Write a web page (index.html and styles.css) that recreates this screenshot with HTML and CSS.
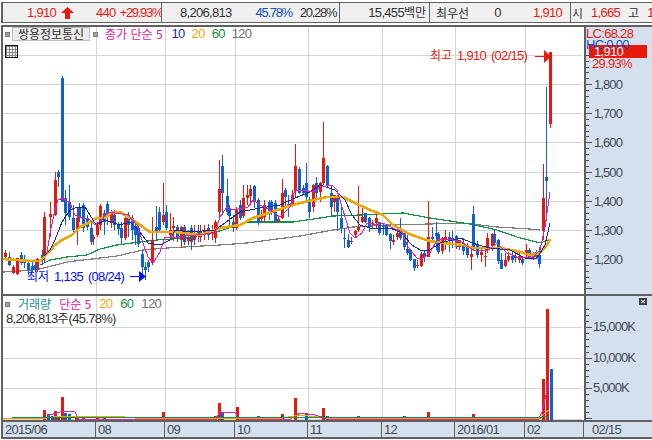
FILE: index.html
```html
<!DOCTYPE html>
<html lang="ko">
<head>
    <meta charset="UTF-8">
    <title>쌍용정보통신 차트</title>
    <link rel="stylesheet" href="styles.css">
</head>
<body>
    <div class="quote-bar">
        <div class="cell cell-price">
            <span class="up">1,910</span>
            <svg class="up-arrow" width="13" height="12" viewBox="0 0 13 12"><polygon points="6.5,0 13,6 9,6 9,12 4,12 4,6 0,6" fill="#e8180c"/></svg>
            <span class="up change">440</span>
            <span class="up rate-top pct">+29.93%</span>
        </div>
        <div class="cell cell-volume">
            <span>8,206,813</span>
            <span class="blue ratio pct">45.78%</span>
            <span class="turnover pct">20.28%</span>
        </div>
        <div class="cell cell-amount"><span>15,455<span class="ko">백만</span></span></div>
        <div class="cell cell-best">
            <span class="ko">최우선</span>
            <span class="best-qty">0</span>
            <span class="up best-price">1,910</span>
        </div>
        <div class="cell cell-ohlc">
            <span class="ko">시</span>
            <span class="up open">1,665</span>
            <span class="ko high-label">고</span>
            <span class="up high">1,910</span>
        </div>
    </div>

    <div class="chart">
        <div class="row row-price">
            <div class="plot">
                <svg class="plot-svg" width="581" height="267" viewBox="3 27 581 267">
                    <path class="grid" d="M96.5 27V294M165.5 27V294M235.5 27V294M308.5 27V294M382.5 27V294M455.5 27V294M525.5 27V294"/>
                    <path class="grid" d="M3 55.5H582M3 84.5H582M3 113.5H582M3 142.5H582M3 172.5H582M3 201.5H582M3 230.5H582M3 259.5H582"/>
                    <polyline class="ma ma120" points="3,272 20,271 40,269 67,262 117,256 143,250 167,248 220,245 247,243 300,236 333,230 353,227 387,225 430,224 463,223 497,227 530,229 540,230"/>
                    <polyline class="ma ma60" points="40,265 50,260 67,257 87,255 100,249 117,245 140,242 157,240 187,238 220,231 247,222 293,222 320,218 333,216 360,215 403,213 430,218 450,221 470,224 497,230 517,237 540,243 549,240"/>
                    <g transform="translate(.5 0)">
                        <path class="wick red" d="M5 250V258M13 265V274M17 258V275M37 258V272M44 212V262M50 202V237M55 172V216M77 207V245M93 235V245M97 222V237M100 204V230M111 210V228M125 215V240M152 217V265M163 183V225M170 213V238M173 217V241M181 226V248M188 230V245M194 225V245M200 225V242M204 225V240M212 225V240M215 220V243M219 160V220M236 207V230M243 185V218M247 185V205M250 185V205M261 210V222M264 200V222M278 215V223M282 179V219M292 190V207M295 144V198M313 184V212M320 182V202M323 122V185M334 195V212M351 237V244M355 230V238M358 186V232M362 205V223M372 220V228M376 213V228M393 235V245M397 232V240M417 260V268M421 252V267M428 201V257M442 237V254M445 230V250M459 240V250M471 248V270M481 247V262M485 247V267M487 233V253M492 233V251M505 253V267M508 252V262M519 252V263M526 244V258M533 252V260M543 164V240M550 52V128"/>
                        <path class="wick blue" d="M9 252V266M21 252V265M24 255V268M28 262V275M32 262V272M35 262V272M42 250V265M58 170V187M62 76V202M65 190V225M69 185V220M73 205V235M79 203V222M83 203V232M87 215V230M91 220V245M104 210V235M107 201V225M114 210V230M118 222V235M121 222V244M128 212V237M132 215V240M135 220V245M138 222V247M142 250V276M145 262V280M148 260V272M156 206V240M159 207V232M166 205V230M177 225V242M184 225V245M191 225V250M198 225V242M208 224V240M222 155V215M227 179V215M229 205V228M233 215V232M240 200V220M254 185V208M258 198V225M269 200V220M271 200V215M275 200V223M285 188V208M288 195V217M299 167V194M303 185V195M306 163V202M309 197V218M316 177V200M327 165V187M331 185V216M337 195V231M341 205V233M344 228V248M348 234V248M365 213V223M369 217V232M379 222V235M383 223V235M386 224V236M390 233V249M400 218V240M404 233V250M407 233V255M410 249V261M414 259V271M424 250V262M432 227V243M436 222V250M438 232V254M449 232V252M452 231V248M456 235V249M463 238V255M467 243V258M473 206V250M477 241V258M494 230V245M498 239V264M501 253V269M512 252V263M515 253V262M522 257V265M529 248V258M536 250V258M539 247V268M546 87V221"/>
                        <path class="body red" d="M5 253V257M13 267V273M17 258V274M37 259V270M44 217V255M50 214V217M55 180V215M77 218V230M93 237V239M97 225V235M100 206V225M111 213V223M125 218V238M152 240V263M163 215V222M170 230V235M173 226V228M181 227V240M188 238V241M194 233V240M200 231V237M204 230V233M212 232V234M215 222V238M219 189V212M236 209V228M243 198V216M247 195V198M250 189V196M261 215V219M264 205V217M278 219V221M282 193V218M292 195V205M295 166V190M313 185V207M320 183V192M323 158V183M334 195V202M351 241V242M355 231V235M358 227V230M362 217V222M372 223V224M376 218V223M393 240V242M397 233V237M417 265V266M421 254V266M428 237V257M442 238V251M445 237V239M459 240V247M471 254V257M481 252V255M485 256V257M487 238V250M492 234V246M505 260V266M508 256V260M519 256V260M526 250V255M533 253V257M543 198V231M550 52V124"/>
                        <path class="body blue" d="M9 257V265M21 255V263M24 259V263M28 263V270M32 266V270M35 265V270M42 255V260M58 172V177M62 78V202M65 198V213M69 202V217M73 218V230M79 207V218M83 205V228M87 218V227M91 228V242M104 213V222M107 204V215M114 215V225M118 224V229M121 228V238M128 215V225M132 218V230M135 226V235M138 228V244M142 254V267M145 267V270M148 262V267M156 227V233M159 212V230M166 212V228M177 227V238M184 227V242M191 228V242M198 232V235M208 228V235M222 166V193M227 196V212M229 208V216M233 222V228M240 205V218M254 186V202M258 200V223M269 202V213M271 202V210M275 203V222M285 190V197M288 204V206M299 169V193M303 188V193M306 183V197M309 202V212M316 183V193M327 166V186M331 193V207M337 196V212M341 218V228M344 238V239M348 240V247M365 213V222M369 218V227M379 222V233M383 225V227M386 225V235M390 234V241M400 228V238M404 233V247M407 249V253M410 250V260M414 259V268M424 253V257M432 237V239M436 233V236M438 234V252M449 237V239M452 238V241M456 236V247M463 243V251M467 246V255M473 214V247M477 244V255M494 234V243M498 240V261M501 260V269M512 256V260M515 256V258M522 259V263M529 250V257M536 252V257M539 255V264M546 177V181"/>
                    </g>
                    <polyline class="ma ma20" points="3,259 30,261 40,261 46,255 55,245 62,240 72,235 80,227 90,222 97,218 105,218 112,212 120,212 130,218 140,225 150,232 175,232 200,235 220,228 240,225 253,218 277,210 300,203 327,197 343,197 353,202 370,210 383,215 393,225 407,233 420,238 430,241 443,243 463,245 473,248 500,248 517,251 530,255 540,253 547,245 550,239"/>
                    <polyline class="ma ma10" points="44,256 50,250 55,240 62,222 70,210 78,207 85,207 90,215 96,225 105,220 120,225 130,222 140,232 148,243 160,245 170,240 175,230 190,232 215,230 222,225 240,212 260,208 280,205 295,198 310,192 320,185 335,190 345,200 352,215 360,225 370,228 390,228 400,232 412,245 420,250 430,250 440,243 460,238 478,245 490,248 510,250 525,258 537,258 545,245 550,223"/>
                    <polyline class="ma ma5" points="47,253 50,233 55,210 58,200 63,198 70,203 75,215 82,218 88,218 95,225 102,220 108,212 115,213 128,215 137,225 143,243 148,257 153,263 160,252 165,237 177,237 215,233 220,217 227,207 233,210 248,207 253,200 260,205 270,210 280,217 290,207 295,190 302,190 313,192 320,187 332,185 337,190 342,207 350,233 355,238 362,233 367,223 377,225 383,223 393,228 402,232 408,247 417,258 423,258 430,253 437,240 450,239 463,243 473,250 487,251 497,243 507,253 520,258 533,257 540,250 545,227 550,192"/>
                    <path class="note-line red-line" d="M535 56.5H546"/>
                    <polygon class="red-fill" points="544,50 551,56.5 544,63"/>
                    <path class="note-line blue-line" d="M130 276.5H140"/>
                    <polygon class="blue-fill" points="139,271 146,276.5 139,282"/>
                </svg>
                <div class="legend legend-price">
                    <span class="dot"></span>
                    <span class="stock-name ko">쌍용정보통신</span>
                    <span class="dot"></span>
                    <span class="magenta ko label-ma">종가 단순 5</span>
                    <span class="navy">10</span>
                    <span class="orange">20</span>
                    <span class="green">60</span>
                    <span class="gray">120</span>
                </div>
                <div class="table-btn">
                    <svg width="11" height="11" viewBox="0 0 11 11"><path d="M0 .5H11M0 3.5H11M0 6.5H11M0 9.5H11M.5 0V11M3.5 0V11M6.5 0V11M9.5 0V11" stroke="#8a8a8a" fill="none"/></svg>
                </div>
                <div class="note note-high"><span class="ko">최고</span> 1,910 (02/15)</div>
                <div class="note note-low"><span class="ko">최저</span> 1,135 (08/24)</div>
            </div>
            <div class="axis">
                <svg width="66" height="267" viewBox="586 27 66 267">
                    <path class="tick" d="M586 55.5H589M586 61.5H589M586 67.5H589M586 72.5H589M586 78.5H589M586 84.5H592M586 90.5H589M586 96.5H589M586 102.5H589M586 107.5H589M586 113.5H592M586 119.5H589M586 125.5H589M586 131.5H589M586 136.5H589M586 142.5H592M586 148.5H589M586 154.5H589M586 160.5H589M586 166.5H589M586 172.5H592M586 178.5H589M586 184.5H589M586 190.5H589M586 195.5H589M586 201.5H592M586 207.5H589M586 213.5H589M586 219.5H589M586 224.5H589M586 230.5H592M586 236.5H589M586 242.5H589M586 248.5H589M586 253.5H589M586 259.5H592M586 265.5H589M586 271.5H589M586 277.5H589M586 282.5H589M586 288.5H592"/>
                    <text class="axis-text" x="594" y="89">1,800</text>
                    <text class="axis-text" x="594" y="118">1,700</text>
                    <text class="axis-text" x="594" y="147">1,600</text>
                    <text class="axis-text" x="594" y="177">1,500</text>
                    <text class="axis-text" x="594" y="206">1,400</text>
                    <text class="axis-text" x="594" y="235">1,300</text>
                    <text class="axis-text" x="594" y="264">1,200</text>
                </svg>
                <div class="axis-head">
                    <div class="up">LC:68.28</div>
                    <div class="blue hc">HC:0.00</div>
                    <div class="price-tag">1,910</div>
                    <div class="up rate">29.93%</div>
                </div>
            </div>
        </div>

        <div class="row row-volume">
            <div class="plot">
                <svg class="plot-svg" width="581" height="124" viewBox="3 296 581 124">
                    <path class="grid" d="M96.5 296V420M165.5 296V420M235.5 296V420M308.5 296V420M382.5 296V420M455.5 296V420M525.5 296V420"/>
                    <path class="grid" d="M3 327.5H582M3 358.5H582M3 388.5H582M3 419.5H582"/>
                    <g transform="translate(.5 0)">
                        <path class="body red" d="M44 410V420M55 411V420M62 397V420M76 416V420M97 416V420M152 418V420M156 418V420M163 412V420M215 416V420M219 403V420M237 407V420M282 414V420M295 398V420M323 408V420M358 416V420M428 412V420M473 414V420M543 379V420M547 309V420"/>
                        <path class="body blue" d="M48 414V420M52 416V420M58 416V420M65 413V420M69 414V420M83 417V420M104 417V420M222 412V420M258 416V420M306 413V420M327 416V420M337 417V420M404 416V420M438 417V420M551 369V420"/>
                    </g>
                    <polyline class="vol-ma ma5" points="43,419.5 50,415 63,411 75,412 79,419.5 215,419.5 220,412 235,413 240,419.5 290,419.5 300,413 315,415 330,419.5 538,419.5 542,412 546,395 549,380"/>
                    <polyline class="vol-ma ma20" points="3,418.5 42,418.5 60,416 73,416.5 120,416.5 140,418.5 280,418.5 300,415 330,418.5 540,418.5 545,413 549,410"/>
                    <polyline class="vol-ma ma60" points="12,417.5 540,417.5 549,416"/>
                </svg>
                <div class="legend legend-volume">
                    <span class="dot"></span>
                    <span class="teal ko">거래량</span>
                    <span class="magenta ko">단순 5</span>
                    <span class="orange">20</span>
                    <span class="green">60</span>
                    <span class="gray">120</span>
                </div>
                <div class="volume-total">8,206,813<span class="ko">주</span>(45.78%)</div>
            </div>
            <div class="axis">
                <svg width="66" height="124" viewBox="586 296 66 124">
                    <path class="tick" d="M586 309.5H589M586 315.5H589M586 321.5H589M586 327.5H592M586 333.5H589M586 339.5H589M586 346.5H589M586 352.5H589M586 358.5H592M586 364.5H589M586 370.5H589M586 376.5H589M586 382.5H589M586 388.5H592M586 394.5H589M586 400.5H589M586 406.5H589M586 412.5H589M586 418.5H592"/>
                    <text class="axis-text" x="593" y="331">15,000K</text>
                    <text class="axis-text" x="593" y="362">10,000K</text>
                    <text class="axis-text" x="593" y="392">5,000K</text>
                </svg>
                <div class="close-btn">
                    <svg width="8" height="7" viewBox="0 0 8 7"><path d="M2 2L6 5M6 2L2 5" stroke="#fff" fill="none"/></svg>
                </div>
            </div>
        </div>

        <div class="date-row">
            <div class="date-cell">2015/06</div>
            <div class="date-cell">08</div>
            <div class="date-cell">09</div>
            <div class="date-cell">10</div>
            <div class="date-cell">11</div>
            <div class="date-cell">12</div>
            <div class="date-cell">2016/01</div>
            <div class="date-cell">02</div>
            <div class="date-cell date-last">02/15</div>
        </div>
    </div>
</body>
</html>
```

FILE: styles.css
```css
* {
    box-sizing: border-box;
}

body {
    margin: 0;
    padding-top: 2px;
    width: 652px;
    height: 440px;
    overflow: hidden;
    background: #fff;
    color: #303030;
    font-family: "Liberation Sans", "Noto Sans CJK KR", sans-serif;
    font-size: 13px;
    line-height: 14px;
    letter-spacing: -0.7px;
}

.ko {
    font-family: "Noto Sans CJK KR", sans-serif;
    font-size: 12px;
    letter-spacing: 0;
}

.pct {
    letter-spacing: -1.3px;
}

.up { color: #e8180c; }
.blue { color: #1050c0; }
.magenta { color: #d820a8; }
.navy { color: #1028a0; }
.orange { color: #eca808; }
.green { color: #109040; }
.gray { color: #707070; }
.teal { color: #209090; }

/* top quote bar */
.quote-bar {
    display: grid;
    grid-template-columns: 159px 178px 90px 141px 1fr;
    height: 21px;
    margin: 0 0 2px 1px;
    border-top: 1px solid #606060;
    border-bottom: 1px solid #606060;
    border-left: 2px solid #606060;
    background: #f0f0f0;
}

.cell {
    display: flex;
    align-items: center;
    overflow: hidden;
    white-space: nowrap;
    border-right: 1px solid #606060;
}

.cell-price { padding-left: 24px; }
.cell-volume { padding-left: 18px; }
.cell-amount { padding-right: 3px; justify-content: flex-end; }
.cell-best { padding: 0 8px 0 6px; }
.cell-ohlc { padding-left: 1px; border-right: 0; }

.up-arrow { margin-left: 5px; flex-shrink: 0; }
.change { margin-left: 22px; }
.rate-top { margin-left: 4px; }
.ratio { margin-left: 24px; }
.turnover { margin-left: 8px; }
.best-qty { margin-left: 25px; }
.best-price { margin-left: auto; }
.open { margin-left: 8px; }
.high-label { margin-left: 8px; }
.high { margin-left: 8px; }

/* chart frame */
.chart {
    margin-left: 1px;
    border-top: 2px solid #606060;
    border-left: 2px solid #606060;
    border-bottom: 2px solid #606060;
}

.row {
    display: flex;
    border-bottom: 2px solid #606060;
}

.row-price { height: 269px; }
.row-volume { height: 126px; }

.plot {
    position: relative;
    width: 583px;
    border-right: 2px solid #606060;
}

.plot-svg,
.axis svg {
    display: block;
}

.grid {
    stroke: #d4d4d4;
    fill: none;
}

.wick {
    fill: none;
    stroke-width: 1;
    shape-rendering: crispEdges;
}

.body {
    fill: none;
    stroke-width: 3;
    shape-rendering: crispEdges;
}

.wick.red, .body.red { stroke: #e8180c; }
.wick.blue, .body.blue { stroke: #1060d0; }

.ma,
.vol-ma {
    fill: none;
    stroke-width: 1;
    shape-rendering: crispEdges;
}

.ma5 { stroke: #e020b0; }
.ma10 { stroke: #1028a8; }
.ma20 { stroke: #f0a808; }
.ma60 { stroke: #109040; }
.ma120 { stroke: #808080; }
.row-price .ma20 { stroke-width: 2.6; }
.row-price .ma60,
.row-price .ma120 { stroke-width: 1.2; }

.note-line { stroke-width: 1; fill: none; }
.red-line { stroke: #e8180c; }
.blue-line { stroke: #0010f0; }
.red-fill { fill: #e8180c; }
.blue-fill { fill: #0010f0; }

/* legends over the plots */
.legend {
    position: absolute;
    display: flex;
    align-items: center;
    height: 14px;
    white-space: nowrap;
}

.legend-price {
    left: 2px;
    top: 0;
    gap: 7px;
}

.legend-volume {
    left: 2px;
    top: 1px;
    gap: 8px;
}

.dot {
    width: 5px;
    height: 5px;
    background: #a0a0a0;
    border: 1px solid #808080;
}

.stock-name {
    margin: 0 -4px 0 -5px;
    width: 78px;
    height: 14px;
    line-height: 12px;
    text-align: center;
    background: #ececec;
    border: 1px solid #c0c0c0;
}

.label-ma {
    margin-right: 2px;
}

.table-btn {
    position: absolute;
    left: 2px;
    top: 18px;
    width: 13px;
    height: 13px;
    border: 1px solid #101010;
}

.table-btn svg {
    display: block;
}

.note {
    position: absolute;
    white-space: nowrap;
    word-spacing: 2px;
}

.note-high {
    left: 427px;
    top: 21px;
    color: #e8180c;
}

.note-low {
    left: 24px;
    top: 242px;
    color: #0010f0;
}

.volume-total {
    position: absolute;
    left: 3px;
    top: 15px;
    white-space: nowrap;
}

/* right axis */
.axis {
    position: relative;
    flex: 1;
    background: #d5e0ee;
}

.tick {
    stroke: #505050;
    fill: none;
}

.axis-text {
    fill: #404850;
    font-size: 13px;
    letter-spacing: -0.9px;
}

.axis-head {
    position: absolute;
    left: 0;
    top: 0;
    right: 0;
}

.hc {
    margin-top: -3px;
}

.price-tag {
    margin: -7px 5px 0 3px;
    height: 13px;
    padding-left: 5px;
    line-height: 13px;
    color: #fff;
    background: #e8180c;
}

.rate {
    padding-left: 6px;
    line-height: 11px;
}

.close-btn {
    position: absolute;
    left: 53px;
    top: 2px;
    width: 8px;
    height: 7px;
    background: #404040;
}

.close-btn svg {
    display: block;
}

/* date axis */
.date-row {
    display: grid;
    grid-template-columns: 93px 69px 70px 73px 74px 73px 70px 59px 1fr;
    height: 15px;
    background: #d5e0ee;
}

.date-cell {
    padding-left: 2px;
    line-height: 15px;
    color: #404850;
    border-right: 1px solid #606060;
}

.date-last {
    padding-left: 8px;
    border-right: 0;
}
```
